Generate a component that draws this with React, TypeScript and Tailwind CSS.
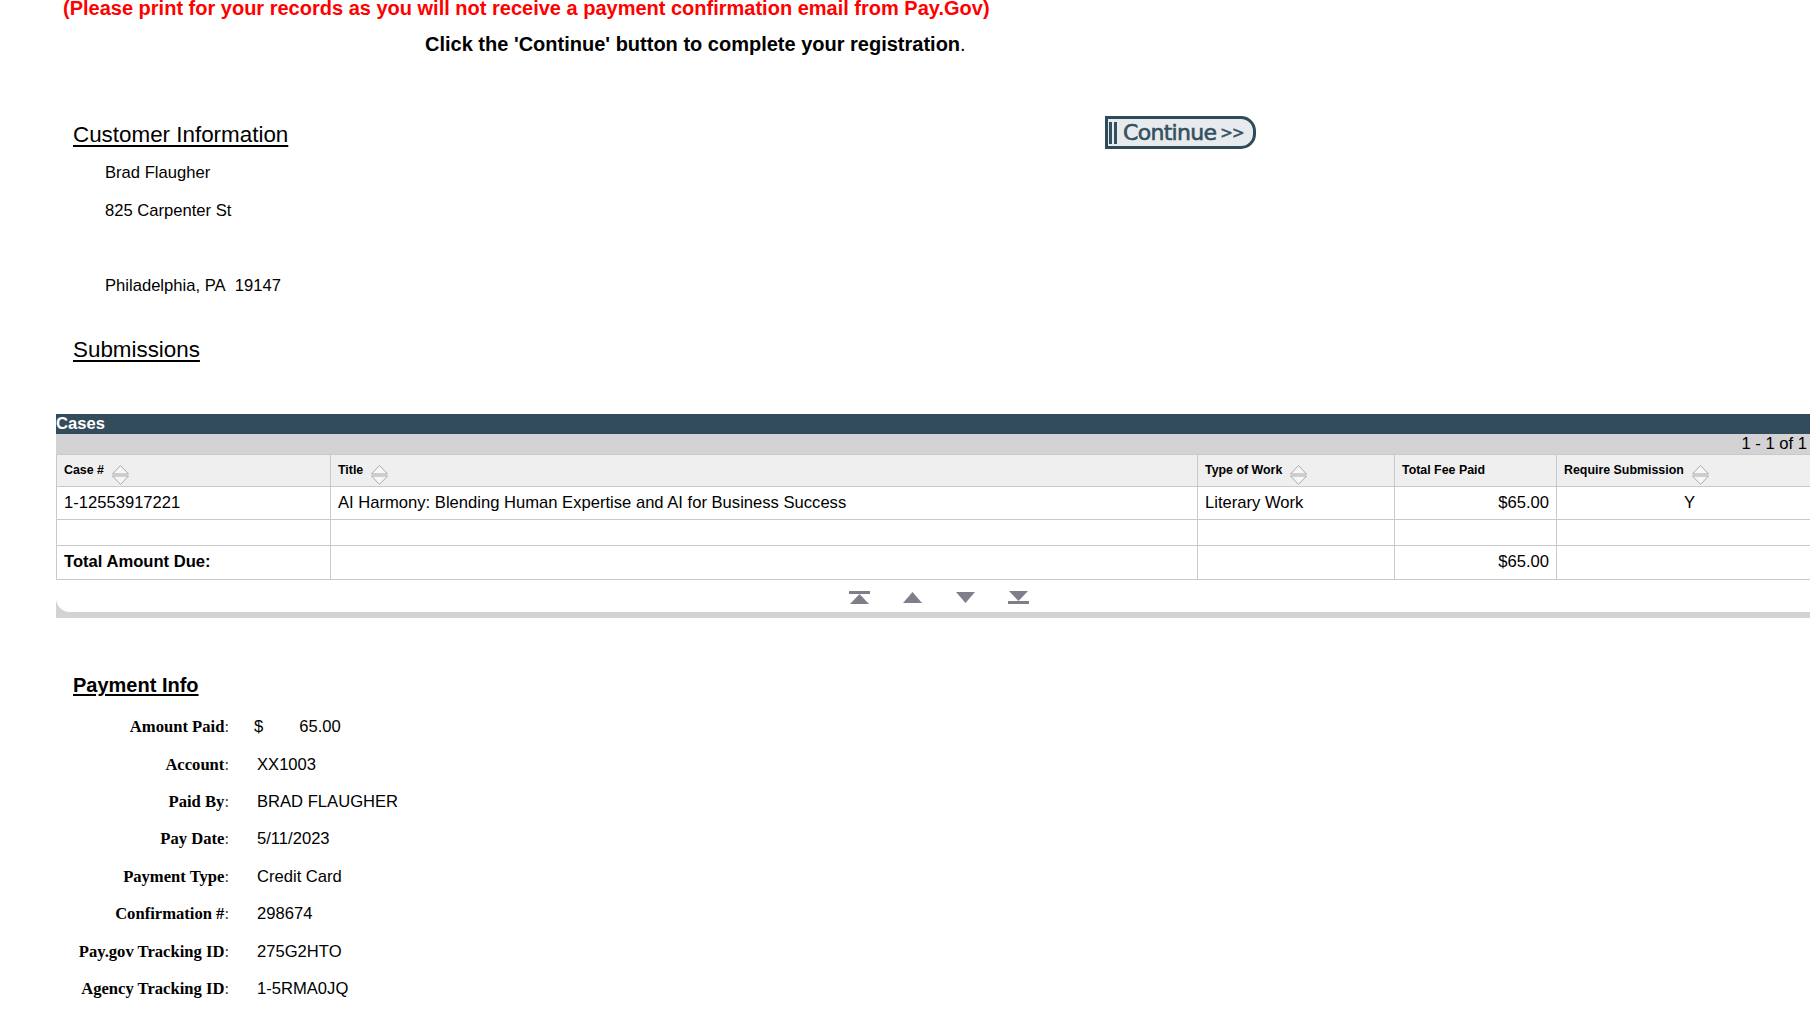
import type { ReactNode } from "react"

// sort arrows used in the grid header
function SortIcon() {
  return (
    <svg width="17" height="22" viewBox="0 0 17 22" className="inline-block translate-y-[4px]">
      <path d="M0.5 10 L8.5 1.5 L16.5 10 Z" fill="#f6f6f6" stroke="#a9a9a9" />
      <path d="M0.5 12 L8.5 20.5 L16.5 12 Z" fill="#f6f6f6" stroke="#a9a9a9" />
    </svg>
  )
}

function PagerIcon({ kind }: { kind: "first" | "prev" | "next" | "last" }) {
  const fill = "#7e7f8a"
  return (
    <svg width="21" height="13" viewBox="0 0 21 13">
      {kind === "first" && (
        <>
          <rect x="0" y="0" width="21" height="3" fill={fill} />
          <path d="M10.5 3 L20 13 L1 13 Z" fill={fill} />
        </>
      )}
      {kind === "prev" && <path d="M10.5 1 L20 12 L1 12 Z" fill={fill} />}
      {kind === "next" && <path d="M1 1 L20 1 L10.5 12 Z" fill={fill} />}
      {kind === "last" && (
        <>
          <path d="M1 0 L20 0 L10.5 10 Z" fill={fill} />
          <rect x="0" y="10" width="21" height="3" fill={fill} />
        </>
      )}
    </svg>
  )
}

function HeadCell({ label, sort = true }: { label: string; sort?: boolean }) {
  return (
    <th className="h-[32px] border border-[#c9c9c9] bg-[#efefef] px-[7px] text-left align-middle text-[12.4px] font-bold">
      <span className="inline-flex items-center gap-[8px]">
        <span>{label}</span>
        {sort && <SortIcon />}
      </span>
    </th>
  )
}

function Cell({ children, className = "" }: { children?: ReactNode; className?: string }) {
  return <td className={`border border-[#c9c9c9] bg-white px-[7px] align-middle ${className}`}>{children}</td>
}

const payment: [string, ReactNode][] = [
  [
    "Amount Paid",
    <span className="-ml-[3px]">
      $<span className="ml-[36px]">65.00</span>
    </span>,
  ],
  ["Account", "XX1003"],
  ["Paid By", "BRAD FLAUGHER"],
  ["Pay Date", "5/11/2023"],
  ["Payment Type", "Credit Card"],
  ["Confirmation #", "298674"],
  ["Pay.gov Tracking ID", "275G2HTO"],
  ["Agency Tracking ID", "1-5RMA0JQ"],
]

export default function App() {
  return (
    <div className="min-h-screen overflow-hidden bg-white font-['Liberation_Sans',Arial,sans-serif] text-[16.6px] text-black">
      <p className="-mt-[3px] ml-[63px] h-[23px] whitespace-nowrap text-[20px] font-bold leading-[23px] text-[#f00]">
        (Please print for your records as you will not receive a payment confirmation email from Pay.Gov)
      </p>
      <p className="ml-[425px] mt-[13px] h-[23px] whitespace-nowrap text-[20px] leading-[23px]">
        <b>Click the 'Continue' button to complete your registration</b>.
      </p>

      {/* Customer info + continue */}
      <div className="mt-[60px] flex h-[33px] items-center">
        <div className="w-[1105px] pl-[73px]">
          <h2 className="mt-[5px] text-[22.4px] leading-[26px] underline decoration-[2px] underline-offset-[3px]">
            Customer Information
          </h2>
        </div>
        <button className="flex h-[33px] w-[151px] items-center rounded-r-[15px] border-[3px] border-[#2f4b5a] bg-[#e7ebed] pl-[1px] text-[#34505f]">
          <span className="h-[22px] w-[3px] bg-[#34505f]" />
          <span className="ml-[2px] h-[22px] w-[3px] bg-[#34505f]" />
          <span className="ml-[6px] font-['DejaVu_Sans',sans-serif] text-[22px] leading-[24px] tracking-[-0.7px] [-webkit-text-stroke:0.6px_#34505f]">
            Continue
          </span>
          <span className="ml-[4px] font-['DejaVu_Sans',sans-serif] text-[15px] leading-[20px] tracking-[-1px] [-webkit-text-stroke:0.5px_#34505f]">
            &gt;&gt;
          </span>
        </button>
      </div>

      <div className="mt-[5px] pl-[105px] leading-[38px]">
        <div className="h-[38px]">Brad Flaugher</div>
        <div className="h-[38px]">825 Carpenter St</div>
        <div className="h-[37px]" />
        <div className="h-[38px]">Philadelphia, PA&nbsp; 19147</div>
      </div>

      <h2 className="ml-[73px] mt-[30px] h-[30px] text-[22.4px] leading-[30px] underline decoration-[2px] underline-offset-[3px]">
        Submissions
      </h2>

      {/* Cases grid */}
      <div className="ml-[56px] mt-[49px]">
        <div className="w-[1766px] bg-[#d3d3d3] pb-[6px]">
          <div className="h-[20px] bg-[#324c5b] text-[16.6px] font-bold leading-[20px] text-white">Cases</div>
          <div className="h-[20px] bg-[#d3d2d4] pr-[15px] text-right text-[16.6px] leading-[20px]">1 - 1 of 1</div>
          <table className="w-[1766px] table-fixed border-collapse bg-white">
            <colgroup>
              <col className="w-[274px]" />
              <col className="w-[867px]" />
              <col className="w-[197px]" />
              <col className="w-[162px]" />
              <col className="w-[266px]" />
            </colgroup>
            <thead>
              <tr>
                <HeadCell label="Case #" />
                <HeadCell label="Title" />
                <HeadCell label="Type of Work" />
                <HeadCell label="Total Fee Paid" sort={false} />
                <HeadCell label="Require Submission" />
              </tr>
            </thead>
            <tbody>
              <tr className="h-[33px]">
                <Cell>1-12553917221</Cell>
                <Cell>AI Harmony: Blending Human Expertise and AI for Business Success</Cell>
                <Cell>Literary Work</Cell>
                <Cell className="text-right">$65.00</Cell>
                <Cell className="text-center">Y</Cell>
              </tr>
              <tr className="h-[26px]">
                <Cell />
                <Cell />
                <Cell />
                <Cell />
                <Cell />
              </tr>
              <tr className="h-[34px]">
                <Cell className="font-bold">Total Amount Due:</Cell>
                <Cell />
                <Cell />
                <Cell className="text-right">$65.00</Cell>
                <Cell />
              </tr>
            </tbody>
          </table>
          <div className="flex h-[32px] items-center justify-center gap-[32px] rounded-bl-[14px] bg-white pt-[2px]">
            <PagerIcon kind="first" />
            <PagerIcon kind="prev" />
            <PagerIcon kind="next" />
            <PagerIcon kind="last" />
          </div>
        </div>
      </div>

      {/* Payment info */}
      <h2 className="ml-[73px] mt-[55px] h-[24px] text-[20px] font-bold leading-[24px] underline underline-offset-[2px]">
        Payment Info
      </h2>
      <div className="mt-[12px]">
        {payment.map(([label, value]) => (
          <div key={label} className="flex h-[37.4px] items-center">
            <div className="w-[229px] text-right font-['Liberation_Serif','Times_New_Roman',serif] text-[16.6px]">
              <b>{label}</b>
              <span className="text-[#444]">:</span>
            </div>
            <div className="pl-[28px]">{value}</div>
          </div>
        ))}
      </div>
    </div>
  )
}
